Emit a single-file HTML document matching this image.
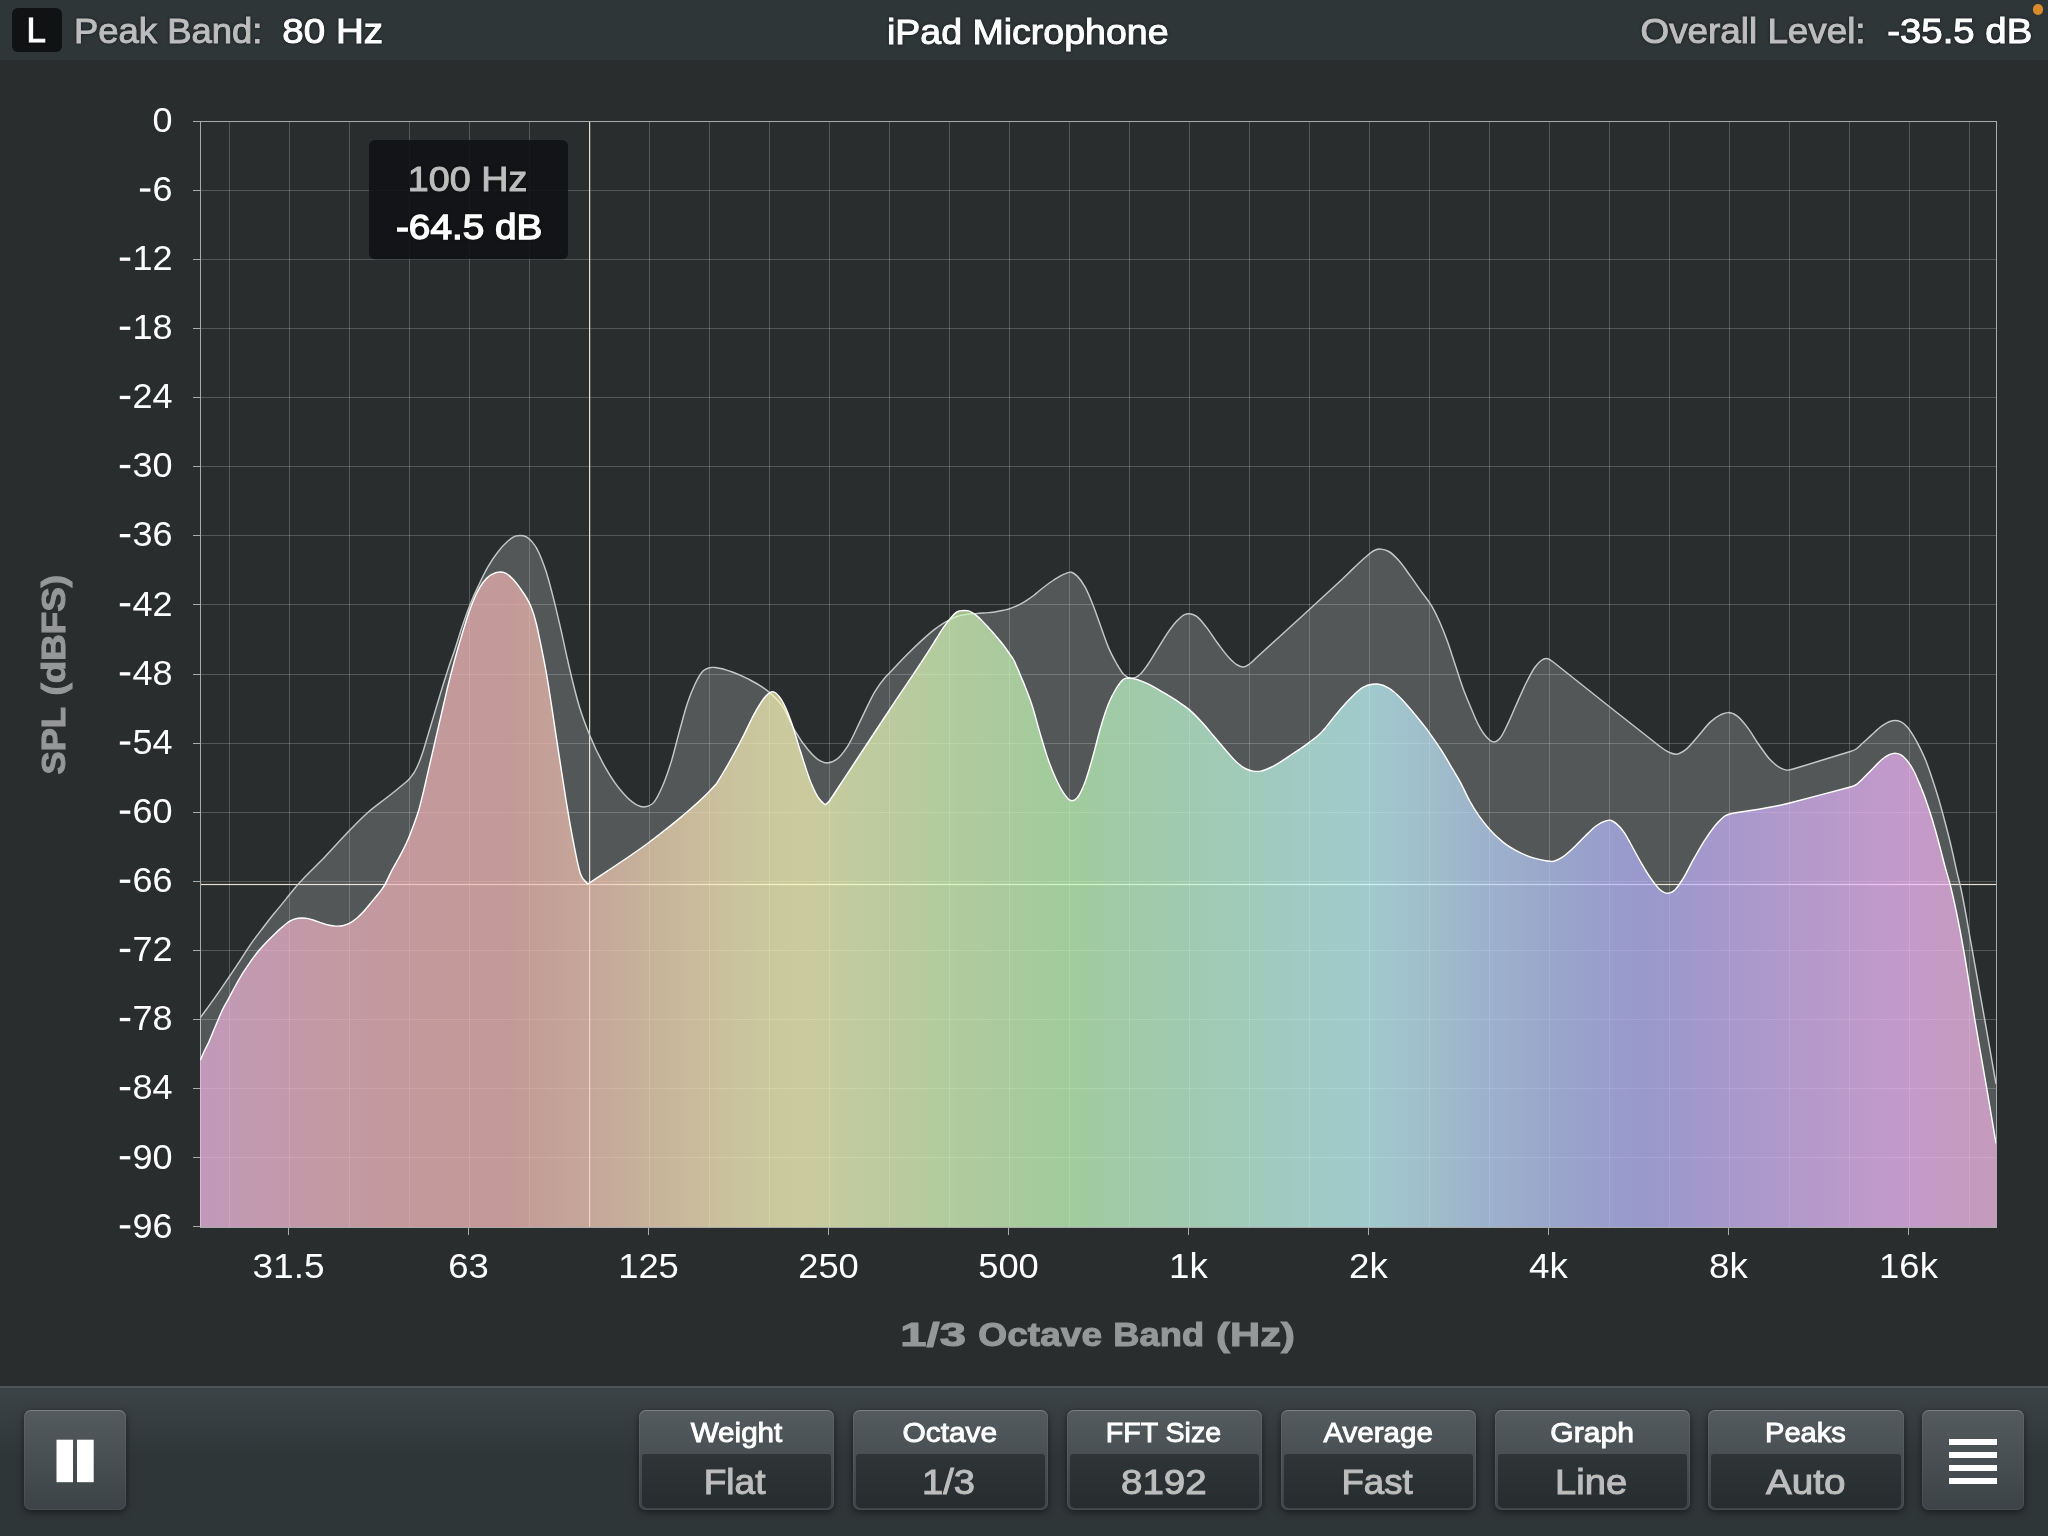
<!DOCTYPE html>
<html><head><meta charset="utf-8"><title>RTA</title>
<style>
html,body{margin:0;padding:0;background:#292d2e;}
body{width:2048px;height:1536px;position:relative;overflow:hidden;font-family:"Liberation Sans",sans-serif;}
#top{position:absolute;left:0;top:0;width:2048px;height:60px;background:#2f3638;}
#lbox{position:absolute;left:12px;top:8px;width:50px;height:44px;background:#111213;border-radius:6px;}
#dot{position:absolute;left:2032.6px;top:4.4px;width:10.8px;height:10.8px;border-radius:50%;background:#d98b2b;}
#tb{position:absolute;left:0;top:1386px;width:2048px;height:150px;background:linear-gradient(#3d4447 0px,#2f3638 72px,#2f3638 150px);}
#tb:before{content:"";position:absolute;left:0;top:0;width:100%;height:2px;background:#4e5558;}
.btn{position:absolute;top:24.2px;width:195.5px;height:100.3px;border-radius:7px;background:linear-gradient(#545b5e,#3c4346);box-shadow:0 2px 7px rgba(0,0,0,.5),inset 0 1px 0 rgba(255,255,255,.18),inset 0 0 0 1px rgba(255,255,255,.06);}
.sq{width:101.6px;}
.fld{position:absolute;left:3px;right:3px;top:43.5px;bottom:2.4px;border-radius:3px 3px 5px 5px;background:linear-gradient(#2f3537,#272c2e);}
svg{position:absolute;left:0;top:0;will-change:transform;}
text{font-family:"Liberation Sans",sans-serif;}
.ax text{font-size:34.2px;fill:#fff;}
.ttl{font-size:34px;font-weight:bold;fill:#959799;stroke:#959799;stroke-width:1.1px;}
.hd{font-size:35px;filter:drop-shadow(0 0 1.5px rgba(0,0,0,.55));}
.g{fill:#bdbdbd;stroke:#bdbdbd;stroke-width:1px;}
.w{fill:#fff;stroke:#fff;stroke-width:1px;}
.bl{font-size:27.5px;fill:#fff;stroke:#fff;stroke-width:.9px;}
.bv{font-size:35px;fill:#bdbdbd;stroke:#bdbdbd;stroke-width:1px;}
</style></head>
<body>
<div id="top"><div id="lbox"></div><div id="dot"></div></div>
<div id="tb">
<div class="btn sq" style="left:24.2px"></div>
<div class="btn" style="left:638.7px"><div class="fld"></div></div><div class="btn" style="left:852.6px"><div class="fld"></div></div><div class="btn" style="left:1066.6px"><div class="fld"></div></div><div class="btn" style="left:1280.5px"><div class="fld"></div></div><div class="btn" style="left:1494.5px"><div class="fld"></div></div><div class="btn" style="left:1708.4px"><div class="fld"></div></div>
<div class="btn sq" style="left:1922.2px"></div>
</div>
<svg width="2048" height="1536" viewBox="0 0 2048 1536">
<defs>
<linearGradient id="rg" gradientUnits="userSpaceOnUse" x1="200" y1="0" x2="1997" y2="0"><stop offset="0.0000" stop-color="rgb(241,182,228)"/><stop offset="0.0334" stop-color="rgb(243,182,212)"/><stop offset="0.0668" stop-color="rgb(243,182,198)"/><stop offset="0.1002" stop-color="rgb(243,182,188)"/><stop offset="0.1336" stop-color="rgb(243,182,182)"/><stop offset="0.1725" stop-color="rgb(243,182,180)"/><stop offset="0.2003" stop-color="rgb(245,195,179)"/><stop offset="0.2337" stop-color="rgb(247,209,182)"/><stop offset="0.2671" stop-color="rgb(250,227,183)"/><stop offset="0.3005" stop-color="rgb(253,242,186)"/><stop offset="0.3311" stop-color="rgb(254,252,188)"/><stop offset="0.3500" stop-color="rgb(247,254,188)"/><stop offset="0.3834" stop-color="rgb(231,252,188)"/><stop offset="0.4168" stop-color="rgb(218,254,186)"/><stop offset="0.4502" stop-color="rgb(205,252,186)"/><stop offset="0.4869" stop-color="rgb(194,254,186)"/><stop offset="0.5170" stop-color="rgb(193,252,202)"/><stop offset="0.5504" stop-color="rgb(193,252,213)"/><stop offset="0.5838" stop-color="rgb(193,252,228)"/><stop offset="0.6171" stop-color="rgb(194,252,243)"/><stop offset="0.6505" stop-color="rgb(194,252,253)"/><stop offset="0.6839" stop-color="rgb(193,234,252)"/><stop offset="0.7173" stop-color="rgb(188,217,253)"/><stop offset="0.7507" stop-color="rgb(185,201,252)"/><stop offset="0.7841" stop-color="rgb(183,188,252)"/><stop offset="0.8041" stop-color="rgb(183,181,252)"/><stop offset="0.8509" stop-color="rgb(204,181,252)"/><stop offset="0.8843" stop-color="rgb(218,182,252)"/><stop offset="0.9176" stop-color="rgb(233,182,252)"/><stop offset="0.9510" stop-color="rgb(243,184,250)"/><stop offset="0.9683" stop-color="rgb(245,184,243)"/><stop offset="0.9994" stop-color="rgb(244,185,230)"/></linearGradient>
<clipPath id="cp"><rect x="200" y="121" width="1796" height="1106"/></clipPath>
</defs>
<g clip-path="url(#cp)">
<g fill="#ffffff" fill-opacity="0.2"><rect x="201" y="190" width="1795" height="1"/><rect x="201" y="259" width="1795" height="1"/><rect x="201" y="328" width="1795" height="1"/><rect x="201" y="397" width="1795" height="1"/><rect x="201" y="466" width="1795" height="1"/><rect x="201" y="535" width="1795" height="1"/><rect x="201" y="604" width="1795" height="1"/><rect x="201" y="674" width="1795" height="1"/><rect x="201" y="743" width="1795" height="1"/><rect x="201" y="812" width="1795" height="1"/><rect x="201" y="881" width="1795" height="1"/><rect x="201" y="950" width="1795" height="1"/><rect x="201" y="1019" width="1795" height="1"/><rect x="201" y="1088" width="1795" height="1"/><rect x="201" y="1157" width="1795" height="1"/><rect x="229" y="122" width="1" height="1105"/><rect x="289" y="122" width="1" height="1105"/><rect x="349" y="122" width="1" height="1105"/><rect x="409" y="122" width="1" height="1105"/><rect x="469" y="122" width="1" height="1105"/><rect x="529" y="122" width="1" height="1105"/><rect x="589" y="122" width="1" height="1105"/><rect x="649" y="122" width="1" height="1105"/><rect x="709" y="122" width="1" height="1105"/><rect x="769" y="122" width="1" height="1105"/><rect x="829" y="122" width="1" height="1105"/><rect x="889" y="122" width="1" height="1105"/><rect x="949" y="122" width="1" height="1105"/><rect x="1009" y="122" width="1" height="1105"/><rect x="1069" y="122" width="1" height="1105"/><rect x="1129" y="122" width="1" height="1105"/><rect x="1189" y="122" width="1" height="1105"/><rect x="1249" y="122" width="1" height="1105"/><rect x="1309" y="122" width="1" height="1105"/><rect x="1369" y="122" width="1" height="1105"/><rect x="1429" y="122" width="1" height="1105"/><rect x="1489" y="122" width="1" height="1105"/><rect x="1549" y="122" width="1" height="1105"/><rect x="1609" y="122" width="1" height="1105"/><rect x="1669" y="122" width="1" height="1105"/><rect x="1729" y="122" width="1" height="1105"/><rect x="1789" y="122" width="1" height="1105"/><rect x="1849" y="122" width="1" height="1105"/><rect x="1909" y="122" width="1" height="1105"/><rect x="1969" y="122" width="1" height="1105"/></g>
<rect x="200" y="121" width="1" height="1107" fill="#a9abab"/>
<g fill="#e4e0d0"><rect x="589" y="122" width="1.2" height="1105"/><rect x="201" y="883.9" width="1795" height="1.2"/></g>
<path d="M200 1017.6 L200.3 1017.6C203.1 1013.9 205.8 1010.2 208.6 1006.4C211.9 1001.9 215.1 997.4 218.4 992.7C222.1 987.4 225.7 982.0 229.4 976.5C232.8 971.5 236.1 966.4 239.5 961.3C243.4 955.3 247.4 948.9 251.3 943.3C255.2 937.7 259.1 932.8 263.0 927.7C266.9 922.6 270.8 917.6 274.7 912.8C277.3 909.6 279.9 906.6 282.5 903.4C284.8 900.6 287.1 897.6 289.4 894.8C292.3 891.2 295.2 887.7 298.1 884.3C307.0 874.0 315.9 866.3 324.8 857.0C333.1 848.3 341.4 838.8 349.7 830.3C355.8 824.1 362.0 817.7 368.1 812.3C374.4 806.8 380.6 802.5 386.9 797.5C392.1 793.4 397.3 789.5 402.5 785.0C404.8 783.0 407.2 781.5 409.5 778.8C411.1 777.0 412.6 774.6 414.2 772.5C415.5 769.9 416.8 767.7 418.1 764.7C419.7 761.1 421.2 756.9 422.8 752.2C424.4 747.5 425.9 741.8 427.5 736.6C429.1 731.4 430.6 726.1 432.2 720.9C433.8 715.7 435.3 710.5 436.9 705.3C438.5 700.1 440.0 694.8 441.6 689.7C443.2 684.6 444.7 679.7 446.3 674.8C447.0 672.7 447.6 670.6 448.3 668.5C450.4 661.9 452.6 656.3 454.7 649.9C457.3 642.1 459.9 633.2 462.5 625.5C464.8 618.6 467.2 611.9 469.5 605.9C472.4 598.6 475.2 592.5 478.1 586.4C481.4 579.4 484.6 572.6 487.9 566.9C491.2 561.2 494.4 556.4 497.7 552.2C500.9 548.0 504.2 544.3 507.4 541.5C510.0 539.2 512.6 537.0 515.2 536.1C516.8 535.5 518.5 535.4 520.1 535.4C522.1 535.4 524.0 535.6 526.0 536.6C527.9 537.6 529.9 539.3 531.8 541.5C533.4 543.4 535.1 545.4 536.7 548.3C538.3 551.2 540.0 555.0 541.6 559.1C543.2 563.2 544.9 567.5 546.5 572.7C548.1 577.9 549.8 584.1 551.4 590.3C553.0 596.5 554.7 603.0 556.3 609.8C557.9 616.4 559.5 623.3 561.1 630.4C562.7 637.6 564.4 645.5 566.0 652.8C567.3 658.6 568.6 664.5 569.9 670.0C573.1 683.8 576.4 696.8 579.6 707.5C582.9 718.3 586.1 726.3 589.4 734.5C594.7 747.8 600.1 758.2 605.4 767.7C611.3 778.1 617.1 786.6 623.0 793.1C627.5 798.2 632.1 802.6 636.6 804.8C639.5 806.2 642.5 807.3 645.4 806.8C648.3 806.3 651.3 805.6 654.2 801.9C656.8 798.6 659.4 793.2 662.0 787.3C665.3 779.8 668.5 770.8 671.8 759.9C674.4 751.2 677.0 740.0 679.6 730.6C682.2 721.2 684.8 711.1 687.4 703.3C690.0 695.5 692.6 689.2 695.2 683.8C697.8 678.4 700.4 673.8 703.0 671.1C705.2 668.9 707.3 668.3 709.5 667.7C711.9 667.0 714.3 667.5 716.7 667.7C721.9 668.2 727.1 670.1 732.3 672.0C737.5 673.9 742.8 676.2 748.0 678.9C755.2 682.6 762.3 686.0 769.5 692.5C774.0 696.6 778.6 700.1 783.1 707.2C787.0 713.3 790.9 723.8 794.8 730.6C799.4 738.5 803.9 744.9 808.5 750.2C812.4 754.7 816.3 758.9 820.2 760.9C822.5 762.1 824.8 762.9 827.1 762.9C830.0 762.9 833.0 761.9 835.9 759.9C839.8 757.2 843.7 752.3 847.6 746.3C852.2 739.2 856.7 728.1 861.3 718.9C865.8 709.8 870.4 699.1 874.9 691.6C878.2 686.2 881.4 681.7 884.7 677.9C886.3 676.1 887.8 674.6 889.4 673.0C895.6 666.5 901.9 659.7 908.1 653.5C915.4 646.3 922.7 639.1 930.0 633.1C932.0 631.5 933.9 629.9 935.9 628.4C937.8 626.9 939.8 625.6 941.7 624.3C943.7 623.0 945.6 621.9 947.6 620.8C949.5 619.7 951.5 618.6 953.4 617.8C955.4 617.0 957.3 616.3 959.3 615.8C961.2 615.3 963.2 614.9 965.1 614.6C967.1 614.3 969.0 614.1 971.0 613.9C972.6 613.8 974.1 613.7 975.7 613.6C978.0 613.4 980.4 613.2 982.7 613.0C984.7 612.9 986.6 612.8 988.6 612.6C990.5 612.4 992.5 612.3 994.4 612.0C996.4 611.7 998.3 611.2 1000.3 610.8C1002.3 610.4 1004.2 610.1 1006.2 609.6C1007.3 609.4 1008.3 609.1 1009.4 608.8C1011.2 608.3 1013.1 607.5 1014.9 606.7C1016.9 605.8 1018.8 604.9 1020.8 603.8C1022.8 602.7 1024.7 601.6 1026.7 600.3C1029.2 598.7 1031.8 597.0 1034.3 595.0C1035.6 594.0 1036.8 592.8 1038.1 591.8C1043.3 587.5 1048.6 583.3 1053.8 580.0C1057.7 577.5 1061.6 574.9 1065.5 573.6C1067.4 572.9 1069.4 571.8 1071.3 572.2C1073.3 572.6 1075.2 574.2 1077.2 576.1C1079.8 578.6 1082.4 582.2 1085.0 586.9C1087.6 591.6 1090.2 598.0 1092.8 604.5C1095.4 611.0 1098.0 618.8 1100.6 625.9C1103.2 633.1 1105.8 641.2 1108.4 647.4C1111.0 653.6 1113.7 658.4 1116.3 663.0C1118.9 667.5 1121.5 672.3 1124.1 674.8C1126.4 677.0 1128.6 678.0 1130.9 678.3C1133.8 678.6 1136.8 677.3 1139.7 674.8C1142.3 672.6 1144.9 668.7 1147.5 665.0C1150.8 660.4 1154.0 654.6 1157.3 649.4C1160.5 644.2 1163.8 638.5 1167.0 633.8C1170.3 629.1 1173.5 624.5 1176.8 621.1C1179.4 618.4 1182.0 615.7 1184.6 614.6C1186.2 613.9 1187.9 613.7 1189.5 613.8C1191.8 613.9 1194.0 614.7 1196.3 616.2C1199.6 618.3 1202.8 622.8 1206.1 626.9C1210.0 631.7 1213.9 638.3 1217.8 643.5C1221.7 648.7 1225.6 654.2 1229.5 658.2C1232.1 660.9 1234.7 663.5 1237.3 665.0C1239.3 666.1 1241.2 667.1 1243.2 667.0C1245.3 666.9 1247.4 665.4 1249.5 664.0C1252.0 662.3 1254.4 659.4 1256.9 657.2C1274.5 641.2 1292.0 625.5 1309.6 609.3C1319.7 599.9 1329.9 590.6 1340.0 581.2C1344.6 577.0 1349.1 572.4 1353.7 568.1C1357.6 564.4 1361.5 560.6 1365.4 557.3C1368.3 554.8 1371.3 551.8 1374.2 550.5C1376.5 549.5 1378.7 549.0 1381.0 549.1C1383.6 549.2 1386.2 550.0 1388.8 551.5C1392.1 553.4 1395.3 556.7 1398.6 560.3C1402.5 564.6 1406.4 570.5 1410.3 575.9C1414.2 581.3 1418.1 587.0 1422.0 592.5C1425.3 597.1 1428.5 600.5 1431.8 606.2C1434.4 610.7 1437.0 616.0 1439.6 621.8C1442.2 627.6 1444.8 634.1 1447.4 641.3C1450.0 648.5 1452.6 657.0 1455.2 664.8C1457.8 672.6 1460.4 681.1 1463.0 688.2C1465.6 695.4 1468.3 701.5 1470.9 707.7C1473.5 713.8 1476.1 720.4 1478.7 725.3C1481.3 730.2 1483.9 734.2 1486.5 737.0C1488.8 739.5 1491.0 741.7 1493.3 741.9C1495.6 742.1 1497.9 740.7 1500.2 738.0C1502.8 734.9 1505.4 728.8 1508.0 723.4C1510.6 718.0 1513.2 711.6 1515.8 705.8C1519.0 698.6 1522.3 690.8 1525.5 684.3C1528.8 677.7 1532.0 671.0 1535.3 666.7C1537.3 664.1 1539.2 661.9 1541.2 660.5C1542.8 659.4 1544.5 658.6 1546.1 658.5C1548.4 658.4 1550.6 660.0 1552.9 661.8C1571.8 676.8 1590.6 691.9 1609.5 706.8C1626.4 720.1 1643.4 733.5 1660.3 746.8C1663.6 749.4 1666.8 751.5 1670.1 752.7C1672.4 753.6 1674.6 754.4 1676.9 754.2C1679.8 753.9 1682.8 751.9 1685.7 749.7C1689.6 746.7 1693.5 741.3 1697.4 737.0C1702.0 731.9 1706.5 725.4 1711.1 721.4C1714.4 718.5 1717.6 716.1 1720.9 714.6C1723.2 713.6 1725.4 712.6 1727.7 712.6C1730.9 712.5 1734.1 713.8 1737.3 716.1C1740.6 718.5 1743.8 722.7 1747.1 726.9C1751.0 731.9 1754.9 739.0 1758.8 744.5C1762.7 750.0 1766.6 756.0 1770.5 760.1C1773.8 763.5 1777.0 766.2 1780.3 767.9C1782.4 769.0 1784.4 769.9 1786.5 770.1C1789.0 770.4 1791.5 769.6 1794.0 768.8C1812.5 763.1 1831.0 757.5 1849.5 751.8C1851.7 751.1 1854.0 750.5 1856.2 749.0C1858.3 747.6 1860.4 745.2 1862.5 743.3C1865.5 740.6 1868.4 737.8 1871.4 735.1C1874.8 732.0 1878.2 728.6 1881.6 726.2C1884.1 724.4 1886.7 722.6 1889.2 721.7C1891.1 721.0 1893.0 720.5 1894.9 720.5C1896.8 720.5 1898.7 720.8 1900.6 721.7C1902.7 722.7 1904.9 724.4 1907.0 726.8C1909.1 729.1 1911.2 732.3 1913.3 735.7C1915.4 739.1 1917.5 742.9 1919.6 747.1C1921.7 751.4 1923.9 755.7 1926.0 761.1C1928.1 766.4 1930.2 772.6 1932.3 778.9C1934.4 785.3 1936.6 792.0 1938.7 799.2C1940.8 806.3 1942.9 814.0 1945.0 822.0C1947.1 830.1 1949.3 838.4 1951.4 847.4C1953.5 856.2 1955.6 866.7 1957.7 875.3C1958.5 878.5 1959.2 881.3 1960.0 884.5C1964.1 901.8 1968.2 927.9 1972.3 950.3C1976.4 972.9 1980.6 996.2 1984.7 1019.5C1988.5 1040.8 1992.2 1062.5 1996.0 1084.0L1997.0 1228 L200 1228 Z" fill="#ffffff" fill-opacity="0.2"/>
<path d="M200.3 1017.6C203.1 1013.9 205.8 1010.2 208.6 1006.4C211.9 1001.9 215.1 997.4 218.4 992.7C222.1 987.4 225.7 982.0 229.4 976.5C232.8 971.5 236.1 966.4 239.5 961.3C243.4 955.3 247.4 948.9 251.3 943.3C255.2 937.7 259.1 932.8 263.0 927.7C266.9 922.6 270.8 917.6 274.7 912.8C277.3 909.6 279.9 906.6 282.5 903.4C284.8 900.6 287.1 897.6 289.4 894.8C292.3 891.2 295.2 887.7 298.1 884.3C307.0 874.0 315.9 866.3 324.8 857.0C333.1 848.3 341.4 838.8 349.7 830.3C355.8 824.1 362.0 817.7 368.1 812.3C374.4 806.8 380.6 802.5 386.9 797.5C392.1 793.4 397.3 789.5 402.5 785.0C404.8 783.0 407.2 781.5 409.5 778.8C411.1 777.0 412.6 774.6 414.2 772.5C415.5 769.9 416.8 767.7 418.1 764.7C419.7 761.1 421.2 756.9 422.8 752.2C424.4 747.5 425.9 741.8 427.5 736.6C429.1 731.4 430.6 726.1 432.2 720.9C433.8 715.7 435.3 710.5 436.9 705.3C438.5 700.1 440.0 694.8 441.6 689.7C443.2 684.6 444.7 679.7 446.3 674.8C447.0 672.7 447.6 670.6 448.3 668.5C450.4 661.9 452.6 656.3 454.7 649.9C457.3 642.1 459.9 633.2 462.5 625.5C464.8 618.6 467.2 611.9 469.5 605.9C472.4 598.6 475.2 592.5 478.1 586.4C481.4 579.4 484.6 572.6 487.9 566.9C491.2 561.2 494.4 556.4 497.7 552.2C500.9 548.0 504.2 544.3 507.4 541.5C510.0 539.2 512.6 537.0 515.2 536.1C516.8 535.5 518.5 535.4 520.1 535.4C522.1 535.4 524.0 535.6 526.0 536.6C527.9 537.6 529.9 539.3 531.8 541.5C533.4 543.4 535.1 545.4 536.7 548.3C538.3 551.2 540.0 555.0 541.6 559.1C543.2 563.2 544.9 567.5 546.5 572.7C548.1 577.9 549.8 584.1 551.4 590.3C553.0 596.5 554.7 603.0 556.3 609.8C557.9 616.4 559.5 623.3 561.1 630.4C562.7 637.6 564.4 645.5 566.0 652.8C567.3 658.6 568.6 664.5 569.9 670.0C573.1 683.8 576.4 696.8 579.6 707.5C582.9 718.3 586.1 726.3 589.4 734.5C594.7 747.8 600.1 758.2 605.4 767.7C611.3 778.1 617.1 786.6 623.0 793.1C627.5 798.2 632.1 802.6 636.6 804.8C639.5 806.2 642.5 807.3 645.4 806.8C648.3 806.3 651.3 805.6 654.2 801.9C656.8 798.6 659.4 793.2 662.0 787.3C665.3 779.8 668.5 770.8 671.8 759.9C674.4 751.2 677.0 740.0 679.6 730.6C682.2 721.2 684.8 711.1 687.4 703.3C690.0 695.5 692.6 689.2 695.2 683.8C697.8 678.4 700.4 673.8 703.0 671.1C705.2 668.9 707.3 668.3 709.5 667.7C711.9 667.0 714.3 667.5 716.7 667.7C721.9 668.2 727.1 670.1 732.3 672.0C737.5 673.9 742.8 676.2 748.0 678.9C755.2 682.6 762.3 686.0 769.5 692.5C774.0 696.6 778.6 700.1 783.1 707.2C787.0 713.3 790.9 723.8 794.8 730.6C799.4 738.5 803.9 744.9 808.5 750.2C812.4 754.7 816.3 758.9 820.2 760.9C822.5 762.1 824.8 762.9 827.1 762.9C830.0 762.9 833.0 761.9 835.9 759.9C839.8 757.2 843.7 752.3 847.6 746.3C852.2 739.2 856.7 728.1 861.3 718.9C865.8 709.8 870.4 699.1 874.9 691.6C878.2 686.2 881.4 681.7 884.7 677.9C886.3 676.1 887.8 674.6 889.4 673.0C895.6 666.5 901.9 659.7 908.1 653.5C915.4 646.3 922.7 639.1 930.0 633.1C932.0 631.5 933.9 629.9 935.9 628.4C937.8 626.9 939.8 625.6 941.7 624.3C943.7 623.0 945.6 621.9 947.6 620.8C949.5 619.7 951.5 618.6 953.4 617.8C955.4 617.0 957.3 616.3 959.3 615.8C961.2 615.3 963.2 614.9 965.1 614.6C967.1 614.3 969.0 614.1 971.0 613.9C972.6 613.8 974.1 613.7 975.7 613.6C978.0 613.4 980.4 613.2 982.7 613.0C984.7 612.9 986.6 612.8 988.6 612.6C990.5 612.4 992.5 612.3 994.4 612.0C996.4 611.7 998.3 611.2 1000.3 610.8C1002.3 610.4 1004.2 610.1 1006.2 609.6C1007.3 609.4 1008.3 609.1 1009.4 608.8C1011.2 608.3 1013.1 607.5 1014.9 606.7C1016.9 605.8 1018.8 604.9 1020.8 603.8C1022.8 602.7 1024.7 601.6 1026.7 600.3C1029.2 598.7 1031.8 597.0 1034.3 595.0C1035.6 594.0 1036.8 592.8 1038.1 591.8C1043.3 587.5 1048.6 583.3 1053.8 580.0C1057.7 577.5 1061.6 574.9 1065.5 573.6C1067.4 572.9 1069.4 571.8 1071.3 572.2C1073.3 572.6 1075.2 574.2 1077.2 576.1C1079.8 578.6 1082.4 582.2 1085.0 586.9C1087.6 591.6 1090.2 598.0 1092.8 604.5C1095.4 611.0 1098.0 618.8 1100.6 625.9C1103.2 633.1 1105.8 641.2 1108.4 647.4C1111.0 653.6 1113.7 658.4 1116.3 663.0C1118.9 667.5 1121.5 672.3 1124.1 674.8C1126.4 677.0 1128.6 678.0 1130.9 678.3C1133.8 678.6 1136.8 677.3 1139.7 674.8C1142.3 672.6 1144.9 668.7 1147.5 665.0C1150.8 660.4 1154.0 654.6 1157.3 649.4C1160.5 644.2 1163.8 638.5 1167.0 633.8C1170.3 629.1 1173.5 624.5 1176.8 621.1C1179.4 618.4 1182.0 615.7 1184.6 614.6C1186.2 613.9 1187.9 613.7 1189.5 613.8C1191.8 613.9 1194.0 614.7 1196.3 616.2C1199.6 618.3 1202.8 622.8 1206.1 626.9C1210.0 631.7 1213.9 638.3 1217.8 643.5C1221.7 648.7 1225.6 654.2 1229.5 658.2C1232.1 660.9 1234.7 663.5 1237.3 665.0C1239.3 666.1 1241.2 667.1 1243.2 667.0C1245.3 666.9 1247.4 665.4 1249.5 664.0C1252.0 662.3 1254.4 659.4 1256.9 657.2C1274.5 641.2 1292.0 625.5 1309.6 609.3C1319.7 599.9 1329.9 590.6 1340.0 581.2C1344.6 577.0 1349.1 572.4 1353.7 568.1C1357.6 564.4 1361.5 560.6 1365.4 557.3C1368.3 554.8 1371.3 551.8 1374.2 550.5C1376.5 549.5 1378.7 549.0 1381.0 549.1C1383.6 549.2 1386.2 550.0 1388.8 551.5C1392.1 553.4 1395.3 556.7 1398.6 560.3C1402.5 564.6 1406.4 570.5 1410.3 575.9C1414.2 581.3 1418.1 587.0 1422.0 592.5C1425.3 597.1 1428.5 600.5 1431.8 606.2C1434.4 610.7 1437.0 616.0 1439.6 621.8C1442.2 627.6 1444.8 634.1 1447.4 641.3C1450.0 648.5 1452.6 657.0 1455.2 664.8C1457.8 672.6 1460.4 681.1 1463.0 688.2C1465.6 695.4 1468.3 701.5 1470.9 707.7C1473.5 713.8 1476.1 720.4 1478.7 725.3C1481.3 730.2 1483.9 734.2 1486.5 737.0C1488.8 739.5 1491.0 741.7 1493.3 741.9C1495.6 742.1 1497.9 740.7 1500.2 738.0C1502.8 734.9 1505.4 728.8 1508.0 723.4C1510.6 718.0 1513.2 711.6 1515.8 705.8C1519.0 698.6 1522.3 690.8 1525.5 684.3C1528.8 677.7 1532.0 671.0 1535.3 666.7C1537.3 664.1 1539.2 661.9 1541.2 660.5C1542.8 659.4 1544.5 658.6 1546.1 658.5C1548.4 658.4 1550.6 660.0 1552.9 661.8C1571.8 676.8 1590.6 691.9 1609.5 706.8C1626.4 720.1 1643.4 733.5 1660.3 746.8C1663.6 749.4 1666.8 751.5 1670.1 752.7C1672.4 753.6 1674.6 754.4 1676.9 754.2C1679.8 753.9 1682.8 751.9 1685.7 749.7C1689.6 746.7 1693.5 741.3 1697.4 737.0C1702.0 731.9 1706.5 725.4 1711.1 721.4C1714.4 718.5 1717.6 716.1 1720.9 714.6C1723.2 713.6 1725.4 712.6 1727.7 712.6C1730.9 712.5 1734.1 713.8 1737.3 716.1C1740.6 718.5 1743.8 722.7 1747.1 726.9C1751.0 731.9 1754.9 739.0 1758.8 744.5C1762.7 750.0 1766.6 756.0 1770.5 760.1C1773.8 763.5 1777.0 766.2 1780.3 767.9C1782.4 769.0 1784.4 769.9 1786.5 770.1C1789.0 770.4 1791.5 769.6 1794.0 768.8C1812.5 763.1 1831.0 757.5 1849.5 751.8C1851.7 751.1 1854.0 750.5 1856.2 749.0C1858.3 747.6 1860.4 745.2 1862.5 743.3C1865.5 740.6 1868.4 737.8 1871.4 735.1C1874.8 732.0 1878.2 728.6 1881.6 726.2C1884.1 724.4 1886.7 722.6 1889.2 721.7C1891.1 721.0 1893.0 720.5 1894.9 720.5C1896.8 720.5 1898.7 720.8 1900.6 721.7C1902.7 722.7 1904.9 724.4 1907.0 726.8C1909.1 729.1 1911.2 732.3 1913.3 735.7C1915.4 739.1 1917.5 742.9 1919.6 747.1C1921.7 751.4 1923.9 755.7 1926.0 761.1C1928.1 766.4 1930.2 772.6 1932.3 778.9C1934.4 785.3 1936.6 792.0 1938.7 799.2C1940.8 806.3 1942.9 814.0 1945.0 822.0C1947.1 830.1 1949.3 838.4 1951.4 847.4C1953.5 856.2 1955.6 866.7 1957.7 875.3C1958.5 878.5 1959.2 881.3 1960.0 884.5C1964.1 901.8 1968.2 927.9 1972.3 950.3C1976.4 972.9 1980.6 996.2 1984.7 1019.5C1988.5 1040.8 1992.2 1062.5 1996.0 1084.0" fill="none" stroke="#c6c7c7" stroke-width="1.45" stroke-linejoin="round"/>
<path d="M200 1060.1 L200.3 1060.1C201.8 1056.8 203.2 1053.4 204.7 1050.3C206.0 1047.6 207.3 1045.3 208.6 1042.5C210.2 1039.0 211.9 1034.7 213.5 1030.8C215.1 1026.9 216.8 1022.9 218.4 1019.1C220.0 1015.4 221.6 1011.5 223.2 1008.3C224.9 1004.9 226.5 1002.3 228.2 999.3C230.7 994.8 233.1 989.9 235.6 985.5C238.2 980.9 240.8 976.3 243.4 972.2C246.0 968.0 248.7 964.2 251.3 960.5C253.9 956.9 256.5 953.4 259.1 950.3C261.7 947.2 264.3 944.4 266.9 941.7C269.5 939.0 272.1 936.4 274.7 933.9C277.3 931.4 279.9 929.1 282.5 926.9C284.8 925.0 287.1 922.8 289.4 921.4C291.0 920.4 292.6 919.6 294.2 919.1C295.5 918.7 296.8 918.5 298.1 918.3C300.7 917.9 303.3 918.0 305.9 918.3C308.5 918.6 311.2 919.4 313.8 920.2C316.4 921.0 319.0 922.1 321.6 923.0C324.2 923.9 326.8 924.8 329.4 925.3C331.5 925.7 333.5 926.0 335.6 926.1C338.0 926.2 340.3 926.2 342.7 925.7C344.9 925.2 347.1 924.5 349.3 923.4C351.8 922.1 354.2 920.4 356.7 918.3C359.3 916.1 361.9 913.4 364.5 910.5C367.1 907.6 369.7 904.3 372.3 901.1C374.9 898.0 377.4 895.1 380.0 891.7C381.3 890.0 382.5 888.5 383.8 886.5C386.4 882.4 389.0 875.8 391.6 870.9C394.2 866.0 396.8 861.8 399.4 856.9C402.0 852.0 404.6 847.3 407.2 841.3C409.3 836.6 411.3 831.2 413.4 825.6C415.0 821.4 416.5 817.5 418.1 812.3C419.7 807.1 421.2 800.8 422.8 794.4C424.4 788.0 425.9 780.9 427.5 774.1C429.1 767.3 430.6 760.6 432.2 753.8C433.8 747.0 435.3 740.2 436.9 733.4C438.5 726.6 440.0 719.9 441.6 713.1C443.2 706.3 444.7 699.4 446.3 692.8C447.8 686.4 449.4 680.1 450.9 674.1C453.5 664.1 456.0 654.9 458.6 646.0C460.6 639.2 462.5 632.7 464.5 626.4C466.2 621.0 467.8 615.5 469.5 610.8C471.7 604.4 474.0 598.9 476.2 594.2C478.5 589.4 480.7 585.6 483.0 582.5C485.3 579.4 487.5 577.4 489.8 575.7C491.8 574.3 493.7 573.3 495.7 572.7C497.0 572.3 498.3 572.0 499.6 572.0C501.6 571.9 503.5 572.3 505.5 573.2C507.8 574.3 510.0 576.3 512.3 578.6C514.9 581.2 517.5 584.6 520.1 588.2C522.4 591.4 524.7 594.5 527.0 598.7C528.3 601.1 529.6 603.3 530.9 606.5C531.9 608.9 532.8 611.5 533.8 614.6C534.8 617.7 535.7 621.3 536.7 625.3C537.7 629.3 538.6 634.0 539.6 638.6C540.6 643.3 541.6 648.2 542.6 653.3C543.7 659.0 544.9 664.9 546.0 671.2C549.7 691.9 553.5 719.1 557.2 743.2C560.1 762.1 563.1 782.3 566.0 800.0C568.3 813.7 570.5 827.2 572.8 839.0C575.3 852.0 577.8 866.0 580.3 873.5C582.8 881.0 585.3 880.5 587.8 884.0C608.4 870.0 628.9 857.5 649.5 842.0C660.2 833.9 670.9 825.7 681.6 816.6C690.9 808.6 700.2 800.9 709.5 791.2C711.9 788.7 714.3 786.0 716.7 783.4C720.6 776.9 724.5 770.7 728.4 763.8C733.0 755.8 737.5 747.2 742.1 738.4C746.7 729.6 751.2 718.9 755.8 711.1C759.0 705.6 762.3 699.8 765.5 696.4C767.8 694.0 770.1 691.6 772.4 691.6C775.3 691.6 778.3 694.9 781.2 699.4C784.4 704.3 787.7 712.2 790.9 720.9C794.2 729.7 797.4 742.0 800.7 752.1C804.0 762.2 807.2 773.3 810.5 781.4C813.4 788.6 816.4 794.9 819.3 799.0C821.2 801.7 823.2 802.9 825.1 804.8C826.5 803.5 828.0 803.2 829.4 801.0C849.4 770.7 869.4 740.3 889.4 710.0C902.9 689.5 916.5 670.3 930.0 648.9C932.0 645.8 933.9 642.7 935.9 639.5C937.8 636.4 939.8 633.0 941.7 630.1C943.7 627.1 945.6 624.5 947.6 621.9C949.5 619.4 951.5 616.8 953.4 614.9C954.6 613.8 955.7 612.7 956.9 612.0C957.9 611.4 958.9 611.2 959.9 610.9C961.4 610.5 962.8 610.4 964.3 610.4C965.8 610.4 967.2 610.4 968.7 610.9C969.9 611.3 971.0 611.9 972.2 612.6C973.4 613.3 974.5 614.0 975.7 614.9C978.0 616.6 980.4 619.0 982.7 621.4C984.7 623.4 986.6 625.6 988.6 627.8C990.5 629.9 992.5 632.0 994.4 634.2C996.4 636.5 998.3 638.9 1000.3 641.3C1002.3 643.8 1004.2 646.1 1006.2 648.9C1007.3 650.4 1008.3 652.1 1009.4 653.6C1010.3 654.8 1011.1 655.8 1012.0 657.1C1012.8 658.3 1013.6 659.6 1014.4 661.2C1015.2 662.7 1015.9 664.8 1016.7 666.5C1017.5 668.2 1018.2 669.9 1019.0 671.7C1019.8 673.6 1020.6 675.7 1021.4 677.6C1022.4 680.1 1023.5 682.4 1024.5 685.0C1027.1 691.4 1029.7 697.9 1032.3 706.0C1034.9 714.1 1037.5 724.6 1040.1 733.4C1042.7 742.2 1045.3 751.3 1047.9 758.8C1050.5 766.3 1053.1 772.6 1055.7 778.3C1058.3 784.0 1060.9 789.1 1063.5 792.9C1065.5 795.8 1067.4 798.6 1069.4 799.8C1070.4 800.4 1071.3 800.7 1072.3 800.7C1073.9 800.7 1075.6 799.7 1077.2 797.8C1079.8 794.8 1082.4 789.0 1085.0 782.2C1087.6 775.4 1090.2 765.9 1092.8 756.8C1095.4 747.7 1098.0 736.3 1100.6 727.5C1103.2 718.7 1105.8 710.6 1108.4 704.1C1111.0 697.5 1113.7 692.7 1116.3 688.4C1118.6 684.7 1120.8 681.3 1123.1 679.6C1124.7 678.3 1126.4 678.3 1128.0 677.7C1130.6 678.2 1133.2 678.4 1135.8 679.1C1139.7 680.1 1143.6 681.8 1147.5 683.6C1152.7 686.0 1157.9 689.2 1163.1 692.3C1168.3 695.4 1173.6 698.5 1178.8 702.1C1182.4 704.5 1185.9 706.9 1189.5 709.9C1193.7 713.5 1198.0 718.0 1202.2 722.6C1206.1 726.8 1210.0 731.7 1213.9 736.3C1217.8 740.9 1221.7 745.6 1225.6 750.0C1229.5 754.4 1233.4 759.3 1237.3 762.7C1239.9 765.0 1242.6 767.1 1245.2 768.5C1247.8 769.9 1250.4 770.7 1253.0 771.1C1255.6 771.5 1258.2 771.5 1260.8 771.1C1264.7 770.5 1268.6 768.5 1272.5 766.6C1277.7 764.1 1282.9 760.2 1288.1 756.8C1295.3 752.1 1302.4 747.7 1309.6 742.1C1313.5 739.1 1317.4 736.3 1321.3 732.4C1325.9 727.8 1330.4 721.4 1335.0 715.8C1336.7 713.8 1338.3 711.7 1340.0 709.7C1343.9 705.1 1347.8 700.8 1351.7 697.0C1355.6 693.2 1359.5 689.3 1363.4 687.2C1366.3 685.6 1369.3 684.7 1372.2 684.3C1374.5 684.0 1376.8 683.9 1379.1 684.3C1382.3 684.8 1385.6 686.3 1388.8 688.2C1392.7 690.5 1396.6 694.2 1400.5 698.0C1405.1 702.5 1409.6 708.1 1414.2 713.6C1419.3 719.8 1424.5 726.0 1429.6 733.1C1433.6 738.6 1437.6 744.4 1441.6 750.7C1445.5 756.8 1449.4 763.6 1453.3 770.2C1455.5 774.0 1457.8 777.5 1460.0 781.6C1463.3 787.5 1466.5 795.2 1469.8 801.1C1473.0 806.9 1476.3 812.1 1479.5 816.7C1482.9 821.6 1486.3 825.6 1489.7 829.4C1494.1 834.4 1498.6 838.5 1503.0 842.1C1508.2 846.3 1513.4 849.2 1518.6 851.9C1523.8 854.6 1529.0 856.6 1534.2 858.1C1538.1 859.3 1542.0 860.2 1545.9 860.7C1548.5 861.1 1551.2 861.8 1553.8 861.3C1556.4 860.8 1559.0 859.3 1561.6 857.7C1565.5 855.3 1569.4 851.6 1573.3 848.0C1577.2 844.4 1581.1 840.0 1585.0 836.3C1588.9 832.5 1592.8 828.2 1596.7 825.5C1599.6 823.5 1602.6 821.8 1605.5 821.0C1607.1 820.5 1608.8 819.9 1610.4 820.2C1612.4 820.5 1614.3 822.0 1616.3 823.6C1618.9 825.7 1621.5 828.6 1624.1 832.3C1626.7 836.0 1629.3 841.4 1631.9 846.0C1635.1 851.8 1638.4 858.1 1641.6 863.6C1644.9 869.2 1648.1 874.6 1651.4 879.2C1654.0 882.9 1656.6 886.6 1659.2 889.0C1661.2 890.8 1663.1 892.3 1665.1 892.9C1666.7 893.4 1668.4 893.4 1670.0 892.9C1671.6 892.4 1673.2 891.4 1674.8 890.0C1677.4 887.6 1680.1 883.3 1682.7 879.2C1686.6 873.1 1690.5 864.5 1694.4 857.7C1698.3 850.9 1702.2 844.0 1706.1 838.2C1710.0 832.4 1713.9 826.8 1717.8 822.6C1720.4 819.8 1723.0 817.2 1725.6 815.7C1727.2 814.8 1728.9 814.4 1730.5 813.8C1750.2 810.2 1770.0 808.2 1789.7 803.0C1809.6 797.7 1829.6 792.5 1849.5 787.2C1851.7 786.6 1854.0 786.1 1856.2 784.6C1858.3 783.2 1860.4 780.9 1862.5 778.9C1865.5 776.1 1868.4 773.0 1871.4 770.0C1874.8 766.6 1878.2 762.6 1881.6 759.8C1884.1 757.7 1886.7 755.8 1889.2 754.7C1891.1 753.9 1893.0 753.2 1894.9 753.2C1896.8 753.2 1898.7 753.6 1900.6 754.7C1902.7 755.9 1904.9 757.9 1907.0 760.5C1909.1 763.0 1911.2 766.1 1913.3 770.0C1915.4 773.9 1917.5 778.9 1919.6 783.9C1921.7 789.0 1923.9 794.4 1926.0 800.4C1928.1 806.3 1930.2 812.6 1932.3 819.5C1934.4 826.5 1936.6 834.4 1938.7 842.3C1940.8 850.1 1942.9 858.8 1945.0 866.5C1946.7 872.7 1948.4 877.9 1950.1 884.5C1954.6 902.1 1959.2 924.9 1963.7 950.3C1967.4 971.0 1971.1 997.3 1974.8 1019.5C1978.8 1043.3 1982.7 1064.7 1986.7 1088.0C1989.8 1106.2 1992.9 1125.0 1996.0 1143.5L1997.0 1228 L200 1228 Z" fill="url(#rg)" fill-opacity="0.7"/>
<path d="M200.3 1060.1C201.8 1056.8 203.2 1053.4 204.7 1050.3C206.0 1047.6 207.3 1045.3 208.6 1042.5C210.2 1039.0 211.9 1034.7 213.5 1030.8C215.1 1026.9 216.8 1022.9 218.4 1019.1C220.0 1015.4 221.6 1011.5 223.2 1008.3C224.9 1004.9 226.5 1002.3 228.2 999.3C230.7 994.8 233.1 989.9 235.6 985.5C238.2 980.9 240.8 976.3 243.4 972.2C246.0 968.0 248.7 964.2 251.3 960.5C253.9 956.9 256.5 953.4 259.1 950.3C261.7 947.2 264.3 944.4 266.9 941.7C269.5 939.0 272.1 936.4 274.7 933.9C277.3 931.4 279.9 929.1 282.5 926.9C284.8 925.0 287.1 922.8 289.4 921.4C291.0 920.4 292.6 919.6 294.2 919.1C295.5 918.7 296.8 918.5 298.1 918.3C300.7 917.9 303.3 918.0 305.9 918.3C308.5 918.6 311.2 919.4 313.8 920.2C316.4 921.0 319.0 922.1 321.6 923.0C324.2 923.9 326.8 924.8 329.4 925.3C331.5 925.7 333.5 926.0 335.6 926.1C338.0 926.2 340.3 926.2 342.7 925.7C344.9 925.2 347.1 924.5 349.3 923.4C351.8 922.1 354.2 920.4 356.7 918.3C359.3 916.1 361.9 913.4 364.5 910.5C367.1 907.6 369.7 904.3 372.3 901.1C374.9 898.0 377.4 895.1 380.0 891.7C381.3 890.0 382.5 888.5 383.8 886.5C386.4 882.4 389.0 875.8 391.6 870.9C394.2 866.0 396.8 861.8 399.4 856.9C402.0 852.0 404.6 847.3 407.2 841.3C409.3 836.6 411.3 831.2 413.4 825.6C415.0 821.4 416.5 817.5 418.1 812.3C419.7 807.1 421.2 800.8 422.8 794.4C424.4 788.0 425.9 780.9 427.5 774.1C429.1 767.3 430.6 760.6 432.2 753.8C433.8 747.0 435.3 740.2 436.9 733.4C438.5 726.6 440.0 719.9 441.6 713.1C443.2 706.3 444.7 699.4 446.3 692.8C447.8 686.4 449.4 680.1 450.9 674.1C453.5 664.1 456.0 654.9 458.6 646.0C460.6 639.2 462.5 632.7 464.5 626.4C466.2 621.0 467.8 615.5 469.5 610.8C471.7 604.4 474.0 598.9 476.2 594.2C478.5 589.4 480.7 585.6 483.0 582.5C485.3 579.4 487.5 577.4 489.8 575.7C491.8 574.3 493.7 573.3 495.7 572.7C497.0 572.3 498.3 572.0 499.6 572.0C501.6 571.9 503.5 572.3 505.5 573.2C507.8 574.3 510.0 576.3 512.3 578.6C514.9 581.2 517.5 584.6 520.1 588.2C522.4 591.4 524.7 594.5 527.0 598.7C528.3 601.1 529.6 603.3 530.9 606.5C531.9 608.9 532.8 611.5 533.8 614.6C534.8 617.7 535.7 621.3 536.7 625.3C537.7 629.3 538.6 634.0 539.6 638.6C540.6 643.3 541.6 648.2 542.6 653.3C543.7 659.0 544.9 664.9 546.0 671.2C549.7 691.9 553.5 719.1 557.2 743.2C560.1 762.1 563.1 782.3 566.0 800.0C568.3 813.7 570.5 827.2 572.8 839.0C575.3 852.0 577.8 866.0 580.3 873.5C582.8 881.0 585.3 880.5 587.8 884.0C608.4 870.0 628.9 857.5 649.5 842.0C660.2 833.9 670.9 825.7 681.6 816.6C690.9 808.6 700.2 800.9 709.5 791.2C711.9 788.7 714.3 786.0 716.7 783.4C720.6 776.9 724.5 770.7 728.4 763.8C733.0 755.8 737.5 747.2 742.1 738.4C746.7 729.6 751.2 718.9 755.8 711.1C759.0 705.6 762.3 699.8 765.5 696.4C767.8 694.0 770.1 691.6 772.4 691.6C775.3 691.6 778.3 694.9 781.2 699.4C784.4 704.3 787.7 712.2 790.9 720.9C794.2 729.7 797.4 742.0 800.7 752.1C804.0 762.2 807.2 773.3 810.5 781.4C813.4 788.6 816.4 794.9 819.3 799.0C821.2 801.7 823.2 802.9 825.1 804.8C826.5 803.5 828.0 803.2 829.4 801.0C849.4 770.7 869.4 740.3 889.4 710.0C902.9 689.5 916.5 670.3 930.0 648.9C932.0 645.8 933.9 642.7 935.9 639.5C937.8 636.4 939.8 633.0 941.7 630.1C943.7 627.1 945.6 624.5 947.6 621.9C949.5 619.4 951.5 616.8 953.4 614.9C954.6 613.8 955.7 612.7 956.9 612.0C957.9 611.4 958.9 611.2 959.9 610.9C961.4 610.5 962.8 610.4 964.3 610.4C965.8 610.4 967.2 610.4 968.7 610.9C969.9 611.3 971.0 611.9 972.2 612.6C973.4 613.3 974.5 614.0 975.7 614.9C978.0 616.6 980.4 619.0 982.7 621.4C984.7 623.4 986.6 625.6 988.6 627.8C990.5 629.9 992.5 632.0 994.4 634.2C996.4 636.5 998.3 638.9 1000.3 641.3C1002.3 643.8 1004.2 646.1 1006.2 648.9C1007.3 650.4 1008.3 652.1 1009.4 653.6C1010.3 654.8 1011.1 655.8 1012.0 657.1C1012.8 658.3 1013.6 659.6 1014.4 661.2C1015.2 662.7 1015.9 664.8 1016.7 666.5C1017.5 668.2 1018.2 669.9 1019.0 671.7C1019.8 673.6 1020.6 675.7 1021.4 677.6C1022.4 680.1 1023.5 682.4 1024.5 685.0C1027.1 691.4 1029.7 697.9 1032.3 706.0C1034.9 714.1 1037.5 724.6 1040.1 733.4C1042.7 742.2 1045.3 751.3 1047.9 758.8C1050.5 766.3 1053.1 772.6 1055.7 778.3C1058.3 784.0 1060.9 789.1 1063.5 792.9C1065.5 795.8 1067.4 798.6 1069.4 799.8C1070.4 800.4 1071.3 800.7 1072.3 800.7C1073.9 800.7 1075.6 799.7 1077.2 797.8C1079.8 794.8 1082.4 789.0 1085.0 782.2C1087.6 775.4 1090.2 765.9 1092.8 756.8C1095.4 747.7 1098.0 736.3 1100.6 727.5C1103.2 718.7 1105.8 710.6 1108.4 704.1C1111.0 697.5 1113.7 692.7 1116.3 688.4C1118.6 684.7 1120.8 681.3 1123.1 679.6C1124.7 678.3 1126.4 678.3 1128.0 677.7C1130.6 678.2 1133.2 678.4 1135.8 679.1C1139.7 680.1 1143.6 681.8 1147.5 683.6C1152.7 686.0 1157.9 689.2 1163.1 692.3C1168.3 695.4 1173.6 698.5 1178.8 702.1C1182.4 704.5 1185.9 706.9 1189.5 709.9C1193.7 713.5 1198.0 718.0 1202.2 722.6C1206.1 726.8 1210.0 731.7 1213.9 736.3C1217.8 740.9 1221.7 745.6 1225.6 750.0C1229.5 754.4 1233.4 759.3 1237.3 762.7C1239.9 765.0 1242.6 767.1 1245.2 768.5C1247.8 769.9 1250.4 770.7 1253.0 771.1C1255.6 771.5 1258.2 771.5 1260.8 771.1C1264.7 770.5 1268.6 768.5 1272.5 766.6C1277.7 764.1 1282.9 760.2 1288.1 756.8C1295.3 752.1 1302.4 747.7 1309.6 742.1C1313.5 739.1 1317.4 736.3 1321.3 732.4C1325.9 727.8 1330.4 721.4 1335.0 715.8C1336.7 713.8 1338.3 711.7 1340.0 709.7C1343.9 705.1 1347.8 700.8 1351.7 697.0C1355.6 693.2 1359.5 689.3 1363.4 687.2C1366.3 685.6 1369.3 684.7 1372.2 684.3C1374.5 684.0 1376.8 683.9 1379.1 684.3C1382.3 684.8 1385.6 686.3 1388.8 688.2C1392.7 690.5 1396.6 694.2 1400.5 698.0C1405.1 702.5 1409.6 708.1 1414.2 713.6C1419.3 719.8 1424.5 726.0 1429.6 733.1C1433.6 738.6 1437.6 744.4 1441.6 750.7C1445.5 756.8 1449.4 763.6 1453.3 770.2C1455.5 774.0 1457.8 777.5 1460.0 781.6C1463.3 787.5 1466.5 795.2 1469.8 801.1C1473.0 806.9 1476.3 812.1 1479.5 816.7C1482.9 821.6 1486.3 825.6 1489.7 829.4C1494.1 834.4 1498.6 838.5 1503.0 842.1C1508.2 846.3 1513.4 849.2 1518.6 851.9C1523.8 854.6 1529.0 856.6 1534.2 858.1C1538.1 859.3 1542.0 860.2 1545.9 860.7C1548.5 861.1 1551.2 861.8 1553.8 861.3C1556.4 860.8 1559.0 859.3 1561.6 857.7C1565.5 855.3 1569.4 851.6 1573.3 848.0C1577.2 844.4 1581.1 840.0 1585.0 836.3C1588.9 832.5 1592.8 828.2 1596.7 825.5C1599.6 823.5 1602.6 821.8 1605.5 821.0C1607.1 820.5 1608.8 819.9 1610.4 820.2C1612.4 820.5 1614.3 822.0 1616.3 823.6C1618.9 825.7 1621.5 828.6 1624.1 832.3C1626.7 836.0 1629.3 841.4 1631.9 846.0C1635.1 851.8 1638.4 858.1 1641.6 863.6C1644.9 869.2 1648.1 874.6 1651.4 879.2C1654.0 882.9 1656.6 886.6 1659.2 889.0C1661.2 890.8 1663.1 892.3 1665.1 892.9C1666.7 893.4 1668.4 893.4 1670.0 892.9C1671.6 892.4 1673.2 891.4 1674.8 890.0C1677.4 887.6 1680.1 883.3 1682.7 879.2C1686.6 873.1 1690.5 864.5 1694.4 857.7C1698.3 850.9 1702.2 844.0 1706.1 838.2C1710.0 832.4 1713.9 826.8 1717.8 822.6C1720.4 819.8 1723.0 817.2 1725.6 815.7C1727.2 814.8 1728.9 814.4 1730.5 813.8C1750.2 810.2 1770.0 808.2 1789.7 803.0C1809.6 797.7 1829.6 792.5 1849.5 787.2C1851.7 786.6 1854.0 786.1 1856.2 784.6C1858.3 783.2 1860.4 780.9 1862.5 778.9C1865.5 776.1 1868.4 773.0 1871.4 770.0C1874.8 766.6 1878.2 762.6 1881.6 759.8C1884.1 757.7 1886.7 755.8 1889.2 754.7C1891.1 753.9 1893.0 753.2 1894.9 753.2C1896.8 753.2 1898.7 753.6 1900.6 754.7C1902.7 755.9 1904.9 757.9 1907.0 760.5C1909.1 763.0 1911.2 766.1 1913.3 770.0C1915.4 773.9 1917.5 778.9 1919.6 783.9C1921.7 789.0 1923.9 794.4 1926.0 800.4C1928.1 806.3 1930.2 812.6 1932.3 819.5C1934.4 826.5 1936.6 834.4 1938.7 842.3C1940.8 850.1 1942.9 858.8 1945.0 866.5C1946.7 872.7 1948.4 877.9 1950.1 884.5C1954.6 902.1 1959.2 924.9 1963.7 950.3C1967.4 971.0 1971.1 997.3 1974.8 1019.5C1978.8 1043.3 1982.7 1064.7 1986.7 1088.0C1989.8 1106.2 1992.9 1125.0 1996.0 1143.5" fill="none" stroke="#ffffff" stroke-width="1.45" stroke-linejoin="round"/>
</g>
<g fill="#a9abab">
<rect x="200" y="121" width="1797" height="1"/><rect x="200" y="1227" width="1797" height="1"/>
<rect x="1996" y="121" width="1" height="1107"/>
<rect x="193" y="121" width="7" height="1"/><rect x="193" y="190" width="7" height="1"/><rect x="193" y="259" width="7" height="1"/><rect x="193" y="328" width="7" height="1"/><rect x="193" y="397" width="7" height="1"/><rect x="193" y="466" width="7" height="1"/><rect x="193" y="535" width="7" height="1"/><rect x="193" y="604" width="7" height="1"/><rect x="193" y="674" width="7" height="1"/><rect x="193" y="743" width="7" height="1"/><rect x="193" y="812" width="7" height="1"/><rect x="193" y="881" width="7" height="1"/><rect x="193" y="950" width="7" height="1"/><rect x="193" y="1019" width="7" height="1"/><rect x="193" y="1088" width="7" height="1"/><rect x="193" y="1157" width="7" height="1"/><rect x="193" y="1226" width="7" height="1"/><rect x="288" y="1228" width="1" height="7"/><rect x="468" y="1228" width="1" height="7"/><rect x="648" y="1228" width="1" height="7"/><rect x="828" y="1228" width="1" height="7"/><rect x="1008" y="1228" width="1" height="7"/><rect x="1188" y="1228" width="1" height="7"/><rect x="1368" y="1228" width="1" height="7"/><rect x="1548" y="1228" width="1" height="7"/><rect x="1728" y="1228" width="1" height="7"/><rect x="1908" y="1228" width="1" height="7"/>
</g>
<rect x="369" y="140" width="199" height="119.3" rx="6" fill="#101113" fill-opacity="0.87"/>
<g class="ax"><text x="172.6" y="131.6" text-anchor="end" textLength="20.0" lengthAdjust="spacingAndGlyphs">0</text><text x="172.6" y="200.7" text-anchor="end" textLength="20.0" lengthAdjust="spacingAndGlyphs">6</text><text x="172.6" y="269.9" text-anchor="end" textLength="40.1" lengthAdjust="spacingAndGlyphs">12</text><text x="172.6" y="339.0" text-anchor="end" textLength="40.1" lengthAdjust="spacingAndGlyphs">18</text><text x="172.6" y="408.1" text-anchor="end" textLength="40.1" lengthAdjust="spacingAndGlyphs">24</text><text x="172.6" y="477.2" text-anchor="end" textLength="40.1" lengthAdjust="spacingAndGlyphs">30</text><text x="172.6" y="546.4" text-anchor="end" textLength="40.1" lengthAdjust="spacingAndGlyphs">36</text><text x="172.6" y="615.5" text-anchor="end" textLength="40.1" lengthAdjust="spacingAndGlyphs">42</text><text x="172.6" y="684.6" text-anchor="end" textLength="40.1" lengthAdjust="spacingAndGlyphs">48</text><text x="172.6" y="753.7" text-anchor="end" textLength="40.1" lengthAdjust="spacingAndGlyphs">54</text><text x="172.6" y="822.9" text-anchor="end" textLength="40.1" lengthAdjust="spacingAndGlyphs">60</text><text x="172.6" y="892.0" text-anchor="end" textLength="40.1" lengthAdjust="spacingAndGlyphs">66</text><text x="172.6" y="961.1" text-anchor="end" textLength="40.1" lengthAdjust="spacingAndGlyphs">72</text><text x="172.6" y="1030.2" text-anchor="end" textLength="40.1" lengthAdjust="spacingAndGlyphs">78</text><text x="172.6" y="1099.3" text-anchor="end" textLength="40.1" lengthAdjust="spacingAndGlyphs">84</text><text x="172.6" y="1168.5" text-anchor="end" textLength="40.1" lengthAdjust="spacingAndGlyphs">90</text><text x="172.6" y="1237.6" text-anchor="end" textLength="40.1" lengthAdjust="spacingAndGlyphs">96</text><g fill="#fff"><rect x="139.9" y="188.4" width="10.5" height="3.3"/><rect x="119.8" y="257.5" width="10.5" height="3.3"/><rect x="119.8" y="326.6" width="10.5" height="3.3"/><rect x="119.8" y="395.8" width="10.5" height="3.3"/><rect x="119.8" y="464.9" width="10.5" height="3.3"/><rect x="119.8" y="534.0" width="10.5" height="3.3"/><rect x="119.8" y="603.1" width="10.5" height="3.3"/><rect x="119.8" y="672.2" width="10.5" height="3.3"/><rect x="119.8" y="741.4" width="10.5" height="3.3"/><rect x="119.8" y="810.5" width="10.5" height="3.3"/><rect x="119.8" y="879.6" width="10.5" height="3.3"/><rect x="119.8" y="948.8" width="10.5" height="3.3"/><rect x="119.8" y="1017.9" width="10.5" height="3.3"/><rect x="119.8" y="1087.0" width="10.5" height="3.3"/><rect x="119.8" y="1156.1" width="10.5" height="3.3"/><rect x="119.8" y="1225.2" width="10.5" height="3.3"/></g><text x="288.5" y="1278.3" text-anchor="middle" textLength="72.1" lengthAdjust="spacingAndGlyphs">31.5</text><text x="468.5" y="1278.3" text-anchor="middle" textLength="40.6" lengthAdjust="spacingAndGlyphs">63</text><text x="648.5" y="1278.3" text-anchor="middle" textLength="60.6" lengthAdjust="spacingAndGlyphs">125</text><text x="828.5" y="1278.3" text-anchor="middle" textLength="60.6" lengthAdjust="spacingAndGlyphs">250</text><text x="1008.5" y="1278.3" text-anchor="middle" textLength="60.6" lengthAdjust="spacingAndGlyphs">500</text><text x="1188.5" y="1278.3" text-anchor="middle" textLength="38.8" lengthAdjust="spacingAndGlyphs">1k</text><text x="1368.5" y="1278.3" text-anchor="middle" textLength="38.8" lengthAdjust="spacingAndGlyphs">2k</text><text x="1548.5" y="1278.3" text-anchor="middle" textLength="38.8" lengthAdjust="spacingAndGlyphs">4k</text><text x="1728.5" y="1278.3" text-anchor="middle" textLength="38.8" lengthAdjust="spacingAndGlyphs">8k</text><text x="1908.5" y="1278.3" text-anchor="middle" textLength="58.8" lengthAdjust="spacingAndGlyphs">16k</text></g>
<g transform="translate(65.4 0) rotate(-90)">
<text class="ttl" x="-774.5" y="0" textLength="67.5" lengthAdjust="spacingAndGlyphs">SPL</text>
<text class="ttl" x="-695.5" y="0" textLength="120.5" lengthAdjust="spacingAndGlyphs">(dBFS)</text>
</g>
<text id="L" class="hd w" x="26.50" y="42.4" textLength="19.40" lengthAdjust="spacingAndGlyphs" style="font-size:34.5px">L</text>
<text id="peak" class="hd g" x="73.99" y="42.6" textLength="188.43" lengthAdjust="spacingAndGlyphs">Peak Band:</text>
<text id="80hz" class="hd w" x="282.35" y="42.6" textLength="100.64" lengthAdjust="spacingAndGlyphs">80 Hz</text>
<text id="title" class="hd w" x="886.97" y="43.9" textLength="281.55" lengthAdjust="spacingAndGlyphs">iPad Microphone</text>
<text id="overall" class="hd g" x="1640.58" y="42.8" textLength="225.01" lengthAdjust="spacingAndGlyphs">Overall Level:</text>
<text id="lvl" class="hd w" x="1887.19" y="42.8" textLength="145.06" lengthAdjust="spacingAndGlyphs">-35.5 dB</text>
<text id="tt1" class="hd g" x="407.87" y="191.0" textLength="119.51" lengthAdjust="spacingAndGlyphs">100 Hz</text>
<text id="tt2" class="hd w" x="395.95" y="239.3" textLength="146.50" lengthAdjust="spacingAndGlyphs" style="stroke-width:1.35px">-64.5 dB</text>
<text id="t1" class="ttl" x="900.37" y="1346.3" textLength="65.46" lengthAdjust="spacingAndGlyphs">1/3</text>
<text id="t2" class="ttl" x="978.38" y="1346.3" textLength="123.70" lengthAdjust="spacingAndGlyphs">Octave</text>
<text id="t3" class="ttl" x="1113.39" y="1346.3" textLength="90.66" lengthAdjust="spacingAndGlyphs">Band</text>
<text id="t4" class="ttl" x="1216.05" y="1346.3" textLength="78.90" lengthAdjust="spacingAndGlyphs">(Hz)</text>
<text id="b0" class="bl" x="690.67" y="1442.1" textLength="91.68" lengthAdjust="spacingAndGlyphs">Weight</text>
<text id="v0" class="bv" x="703.65" y="1493.6" textLength="61.82" lengthAdjust="spacingAndGlyphs">Flat</text>
<text id="b1" class="bl" x="902.47" y="1442.1" textLength="94.68" lengthAdjust="spacingAndGlyphs">Octave</text>
<text id="v1" class="bv" x="921.91" y="1493.6" textLength="53.05" lengthAdjust="spacingAndGlyphs">1/3</text>
<text id="b2" class="bl" x="1105.81" y="1442.1" textLength="115.36" lengthAdjust="spacingAndGlyphs">FFT Size</text>
<text id="v2" class="bv" x="1121.03" y="1493.6" textLength="85.65" lengthAdjust="spacingAndGlyphs">8192</text>
<text id="b3" class="bl" x="1323.42" y="1442.1" textLength="109.43" lengthAdjust="spacingAndGlyphs">Average</text>
<text id="v3" class="bv" x="1341.44" y="1493.6" textLength="71.19" lengthAdjust="spacingAndGlyphs">Fast</text>
<text id="b4" class="bl" x="1550.23" y="1442.1" textLength="83.67" lengthAdjust="spacingAndGlyphs">Graph</text>
<text id="v4" class="bv" x="1555.08" y="1493.6" textLength="72.04" lengthAdjust="spacingAndGlyphs">Line</text>
<text id="b5" class="bl" x="1765.04" y="1442.1" textLength="80.88" lengthAdjust="spacingAndGlyphs">Peaks</text>
<text id="v5" class="bv" x="1765.98" y="1493.6" textLength="79.61" lengthAdjust="spacingAndGlyphs">Auto</text>

<g fill="#fff">
<rect x="56.5" y="1439.7" width="16.5" height="42.5"/><rect x="77" y="1439.7" width="16.7" height="42.5"/>
<rect x="1949" y="1439" width="48" height="6"/><rect x="1949" y="1452" width="48" height="6"/><rect x="1949" y="1465" width="48" height="6"/><rect x="1949" y="1478" width="48" height="6"/>
</g>
</svg>
</body></html>
